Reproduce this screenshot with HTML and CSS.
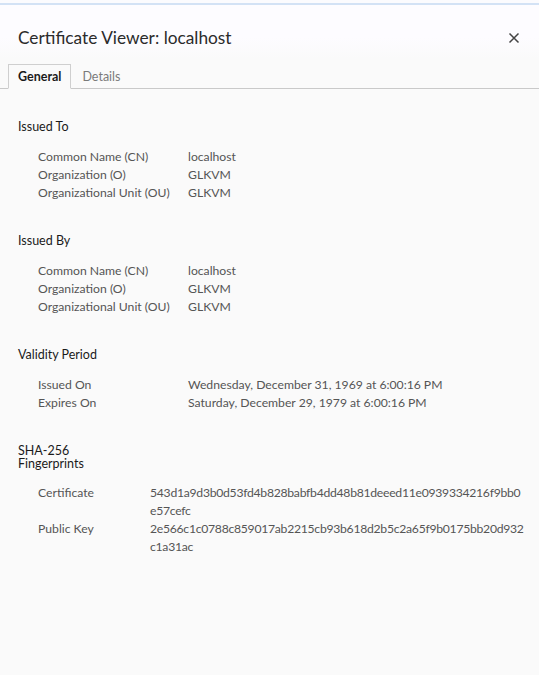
FILE: index.html
```html
<!DOCTYPE html>
<html lang="en">
<head>
<meta charset="utf-8">
<title>Certificate Viewer: localhost</title>
<link rel="stylesheet" href="styles.css">
</head>
<body>
<div class="chrome-top"></div>
<header class="titlebar">
  <h1 class="title">Certificate Viewer: localhost</h1>
  <button class="close" aria-label="Close">
    <svg width="12" height="12" viewBox="0 0 12 12"><path d="M1.5 1.5L10.5 10.5M10.5 1.5L1.5 10.5" stroke="#444" stroke-width="1.5" fill="none"/></svg>
  </button>
</header>
<nav class="tabs">
  <span class="tab active">General</span>
  <span class="tab">Details</span>
</nav>
<main class="content">
  <section class="section">
    <h2 class="heading">Issued To</h2>
    <div class="rows">
      <div class="label">Common Name (CN)</div><div class="value">localhost</div>
      <div class="label">Organization (O)</div><div class="value">GLKVM</div>
      <div class="label">Organizational Unit (OU)</div><div class="value">GLKVM</div>
    </div>
  </section>
  <section class="section">
    <h2 class="heading">Issued By</h2>
    <div class="rows">
      <div class="label">Common Name (CN)</div><div class="value">localhost</div>
      <div class="label">Organization (O)</div><div class="value">GLKVM</div>
      <div class="label">Organizational Unit (OU)</div><div class="value">GLKVM</div>
    </div>
  </section>
  <section class="section">
    <h2 class="heading">Validity Period</h2>
    <div class="rows">
      <div class="label">Issued On</div><div class="value">Wednesday, December 31, 1969 at 6:00:16&#8239;PM</div>
      <div class="label">Expires On</div><div class="value">Saturday, December 29, 1979 at 6:00:16&#8239;PM</div>
    </div>
  </section>
  <section class="section">
    <h2 class="heading narrow">SHA-256 Fingerprints</h2>
    <div class="rows fp">
      <div class="label">Certificate</div><div class="value hash">543d1a9d3b0d53fd4b828babfb4dd48b81deeed11e0939334216f9bb0<wbr>e57cefc</div>
      <div class="label">Public Key</div><div class="value hash">2e566c1c0788c859017ab2215cb93b618d2b5c2a65f9b0175bb20d932<wbr>c1a31ac</div>
    </div>
  </section>
</main>
</body>
</html>
```
FILE: styles.css
```css
html, body {
  margin: 0;
  padding: 0;
}
body {
  background: #fafafa;
  font-family: Lato, "Noto Sans", sans-serif;
  color: #333;
  height: 675px;
  overflow: hidden;
}
.chrome-top {
  height: 3px;
  background: #fbfbfe;
  border-bottom: 2px solid #d3e2f5;
}
.titlebar {
  display: flex;
  align-items: center;
  justify-content: space-between;
  padding: 21px 18px 9px 18px;
  background: linear-gradient(#fdfcff 60%, #fafafa);
}
.title {
  margin: 0;
  font-size: 17.3px;
  line-height: 24px;
  font-weight: normal;
  color: #2b2b2b;
}
.close {
  border: 0;
  background: transparent;
  padding: 0;
  margin-right: 1px;
  width: 12px;
  height: 12px;
  display: flex;
}
.tabs {
  display: flex;
  padding: 5px 0 0 8px;
  border-bottom: 1px solid #c9c9c9;
}
.tab {
  font-size: 12.5px;
  line-height: 23px;
  padding: 0 10px 0 10px;
  border: 1px solid transparent;
  border-bottom: 0;
  margin-bottom: -1px;
  color: #7a7a7a;
}
.tab.active {
  border-color: #cfcfcf;
  border-bottom: 1px solid #fafafa;
  background: #fafafa;
  color: #1a1a1a;
  font-weight: bold;
  padding: 0 9px;
}
.content {
  padding: 31px 18px 0 18px;
  font-size: 12.2px;
}
.section + .section {
  margin-top: 32px;
}
.heading {
  margin: 0 0 15px 0;
  font-size: 12.5px;
  line-height: 13px;
  font-weight: normal;
  color: #1a1a1a;
}
.heading.narrow {
  width: 100px;
  margin-bottom: 14px;
}
.rows {
  display: grid;
  grid-template-columns: 150px 1fr;
  padding-left: 20px;
  line-height: 18px;
  color: #555;
}
.rows.fp {
  grid-template-columns: 112px 1fr;
}
.hash {
  letter-spacing: -0.27px;
  max-width: 385px;
}
```
